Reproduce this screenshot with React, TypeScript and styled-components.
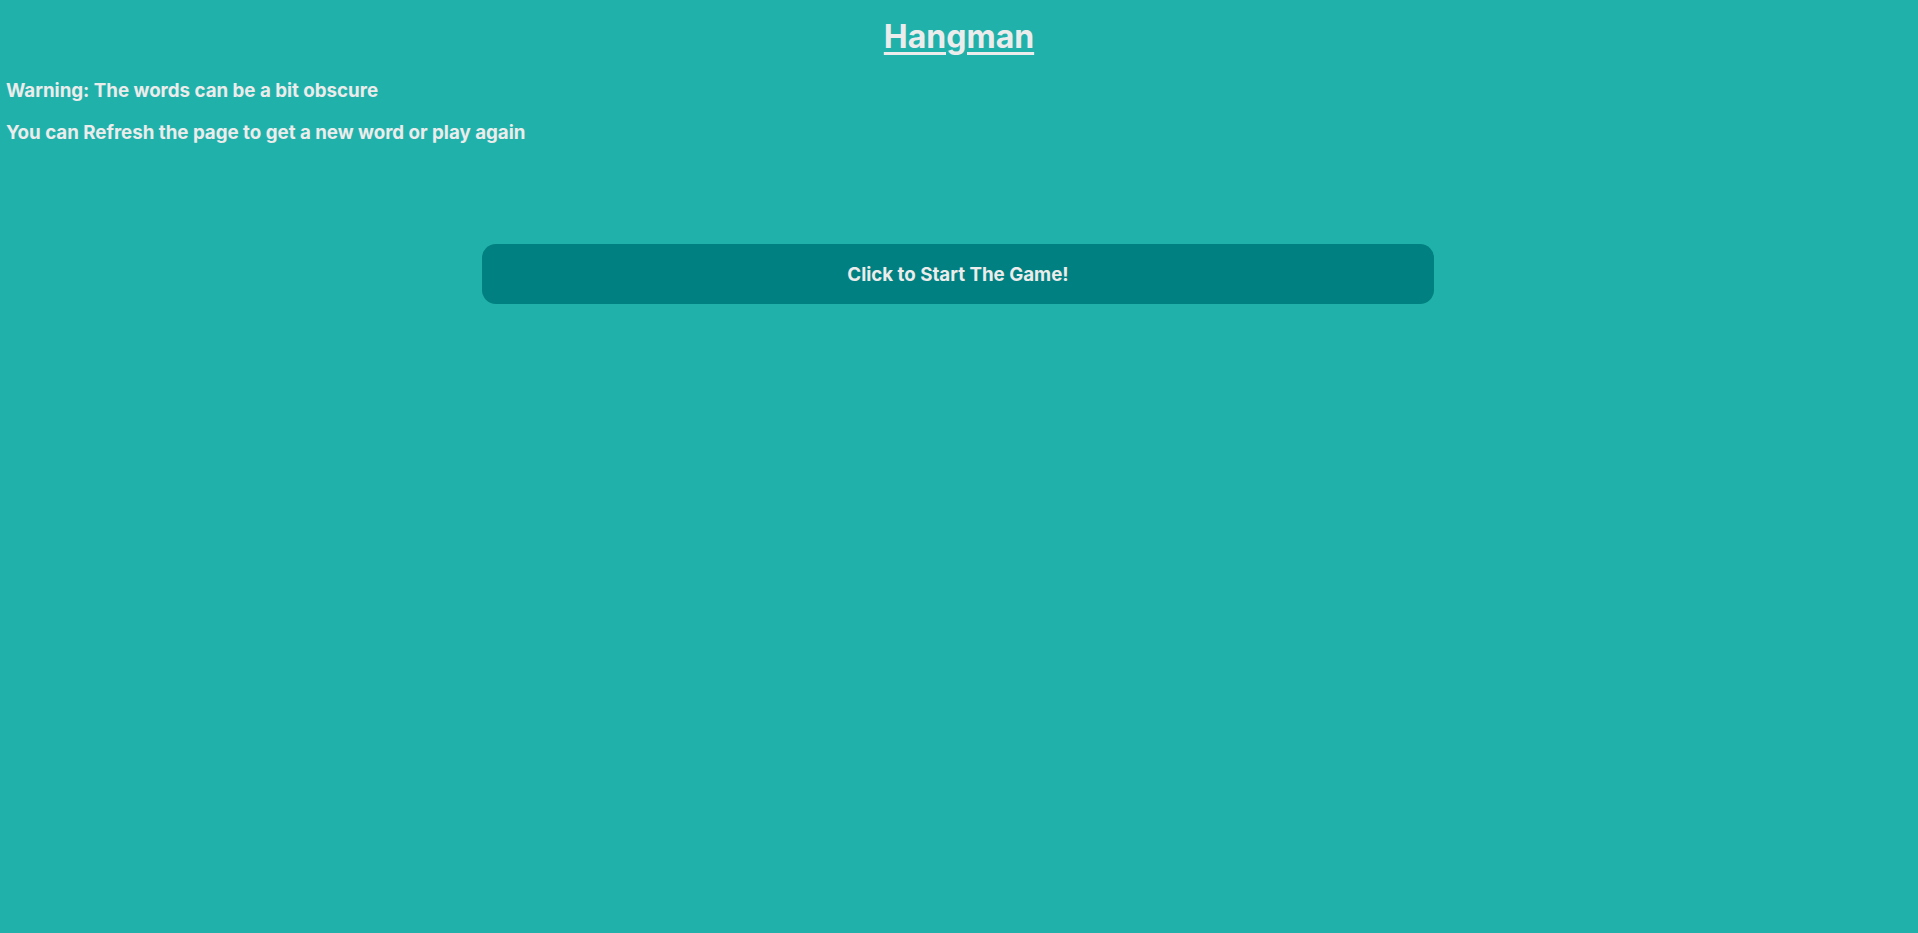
import React from "react";
import styled, { createGlobalStyle } from "styled-components";

const Global = createGlobalStyle`
  html, body {
    margin: 0;
    padding: 0;
    background: #20b2aa;
    min-height: 100%;
  }
  body {
    font-family: Inter, "Noto Sans", sans-serif;
    color: #ececec;
  }
`;

const Page = styled.main`
  min-height: 933px;
  padding: 17px 6px 0;
  box-sizing: border-box;
  display: flex;
  flex-direction: column;
`;

const Title = styled.h1`
  margin: 0 0 23px;
  text-align: center;
  font-size: 32px;
  font-weight: 700;
  line-height: normal;
  text-decoration: underline;
  text-decoration-thickness: 3px;
  text-underline-offset: 3.5px;
`;

const Note = styled.h3`
  margin: 0 0 19px;
  font-size: 18.72px;
  font-weight: 700;
  line-height: normal;
`;

const StartButton = styled.button`
  align-self: center;
  width: 952px;
  height: 60px;
  margin: 81px 0 0 -2px;
  border: none;
  border-radius: 14px;
  background: #008080;
  color: #ececec;
  font-family: Inter, "Noto Sans", sans-serif;
  font-size: 18.72px;
  font-weight: 700;
  cursor: pointer;
`;

export default function App() {
  return (
    <>
      <Global />
      <Page>
        <Title>Hangman</Title>
        <Note>Warning: The words can be a bit obscure</Note>
        <Note>You can Refresh the page to get a new word or play again</Note>
        <StartButton>Click to Start The Game!</StartButton>
      </Page>
    </>
  );
}
